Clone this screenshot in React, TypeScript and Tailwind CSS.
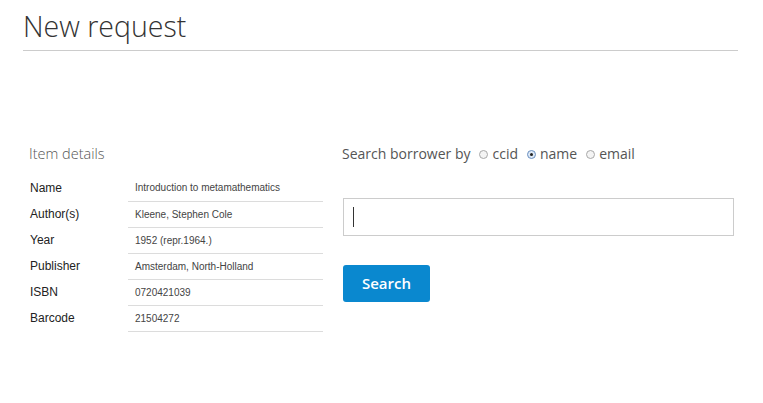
import React from 'react';

const rows: [string, string][] = [
  ['Name', 'Introduction to metamathematics'],
  ['Author(s)', 'Kleene, Stephen Cole'],
  ['Year', '1952 (repr.1964.)'],
  ['Publisher', 'Amsterdam, North-Holland'],
  ['ISBN', '0720421039'],
  ['Barcode', '21504272'],
];

function Radio({ label, checked }: { label: string; checked?: boolean }) {
  return (
    <span className="flex items-center gap-[4px] ml-[9px]">
      <span
        className={`w-[9px] h-[9px] rounded-full border flex items-center justify-center ${
          checked ? 'border-[#6a8fc0] bg-[#dce8f6]' : 'border-[#a8a8a8] bg-[#f4f4f4]'
        }`}
      >
        {checked && <span className="w-[3px] h-[3px] rounded-full bg-[#222]" />}
      </span>
      <span>{label}</span>
    </span>
  );
}

export default function App() {
  return (
    <div className="w-[763px] h-[403px] bg-white px-[23px] pt-[6px] font-['Open_Sans',sans-serif]">
      <h1 className="text-[28.5px] leading-[40px] font-light text-[#333] border-b border-[#cccccc] pb-[4px] mr-[2px]">
        New request
      </h1>

      <div className="flex mt-[93px]">
        <div className="w-[300px] pl-[6px]">
          <h2 className="text-[14.5px] leading-[20px] font-light text-[#555]">Item details</h2>
          <table className="mt-[11px] w-[294px] border-collapse font-['Liberation_Sans',Arial,sans-serif]">
            <tbody>
              {rows.map(([k, v]) => (
                <tr key={k} className="h-[26px]">
                  <td className="w-[99px] pl-[1px] text-[12px] text-[#222] align-middle">{k}</td>
                  <td className="pl-[7px] text-[10px] text-[#444] border-b border-[#dcdcdc] align-middle">{v}</td>
                </tr>
              ))}
            </tbody>
          </table>
        </div>

        <div className="ml-[19px] w-[392px]">
          <div className="flex items-center text-[14px] leading-[20px] text-[#555]">
            <span>Search borrower by</span>
            <Radio label="ccid" />
            <Radio label="name" checked />
            <Radio label="email" />
          </div>
          <div className="ml-[1px] mt-[34px] h-[38px] border border-[#cccccc] flex items-center pl-[9px]">
            <span className="w-[1px] h-[20px] bg-[#333]" />
          </div>
          <button className="ml-[1px] mt-[29px] w-[87px] h-[37px] rounded-[3px] bg-[#0a88cf] text-white text-[15px] font-semibold">
            Search
          </button>
        </div>
      </div>
    </div>
  );
}
